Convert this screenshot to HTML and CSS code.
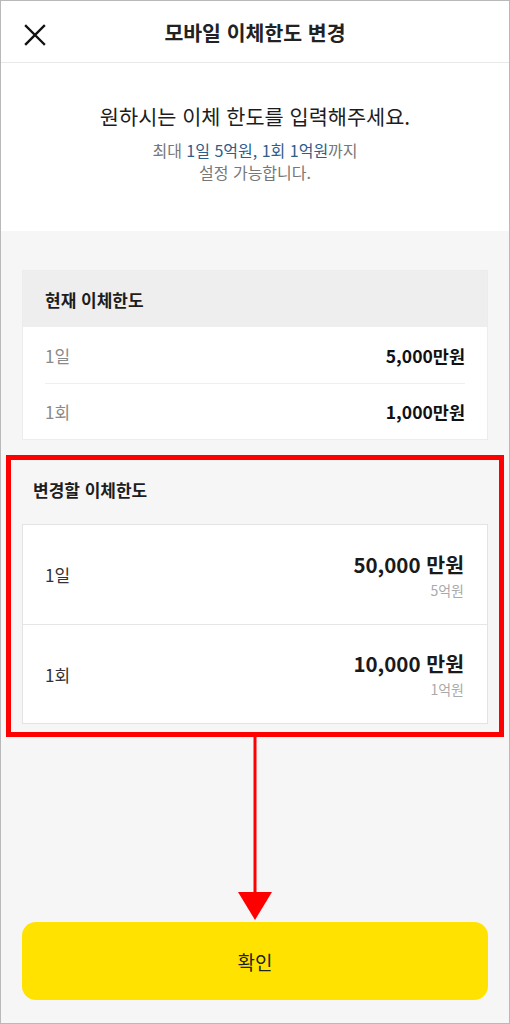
FILE: index.html
```html
<!DOCTYPE html>
<html lang="ko">
<head>
<meta charset="utf-8">
<title>모바일 이체한도 변경</title>
<link rel="stylesheet" href="styles.css">
</head>
<body>
<div class="screen">
  <header class="topbar">
    <span class="close" aria-label="닫기">
      <svg width="24" height="24" viewBox="0 0 24 24"><path d="M3 3 L21 21 M21 3 L3 21" stroke="#111" stroke-width="2.4" stroke-linecap="square" fill="none"/></svg>
    </span>
    <h1 class="title">모바일 이체한도 변경</h1>
  </header>

  <section class="intro">
    <p class="intro-main">원하시는 이체 한도를 입력해주세요.</p>
    <p class="intro-sub">최대 <span class="accent">1일 5억원, 1회 1억원</span>까지<br>설정 가능합니다.</p>
  </section>

  <main class="content">
    <div class="card current">
      <div class="card-head">현재 이체한도</div>
      <div class="row"><span class="row-label">1일</span><span class="row-value">5,000만원</span></div>
      <div class="row"><span class="row-label">1회</span><span class="row-value">1,000만원</span></div>
    </div>

    <section class="change">
      <h2 class="change-title">변경할 이체한도</h2>
      <div class="input-card">
        <div class="irow">
          <span class="irow-label">1일</span>
          <div class="irow-right">
            <span class="irow-value">50,000 만원</span>
            <span class="irow-hint">5억원</span>
          </div>
        </div>
        <div class="irow">
          <span class="irow-label">1회</span>
          <div class="irow-right">
            <span class="irow-value">10,000 만원</span>
            <span class="irow-hint">1억원</span>
          </div>
        </div>
      </div>
    </section>

    <button class="confirm" type="button">확인</button>
  </main>

  <div class="highlight"></div>
  <svg class="arrow" width="40" height="190" viewBox="0 0 40 190">
    <line x1="20" y1="0" x2="20" y2="160" stroke="#ff0000" stroke-width="3"/>
    <polygon points="3,156 37,156 20,184" fill="#ff0000"/>
  </svg>
</div>
</body>
</html>
```

FILE: styles.css
```css
* { box-sizing: border-box; }
html, body { margin: 0; padding: 0; }
body {
  font-family: "Noto Sans CJK KR", "Noto Sans", sans-serif;
  color: #222;
  background: #fff;
}
.screen {
  position: relative;
  width: 510px;
  height: 1024px;
  border: 1px solid #b9b9b9;
  display: flex;
  flex-direction: column;
  background: #f6f6f6;
  overflow: hidden;
}
.topbar {
  height: 62px;
  flex: none;
  background: #fff;
  border-bottom: 1px solid #e8e8e8;
  display: flex;
  align-items: center;
  justify-content: center;
  position: relative;
}
.close {
  position: absolute;
  left: 22px;
  top: 22px;
  width: 24px;
  height: 24px;
  display: block;
}
.close svg { display: block; }
.title {
  margin: 0;
  font-size: 20.5px;
  font-weight: 700;
  color: #222;
}
.intro {
  flex: none;
  height: 168px;
  background: #fff;
  text-align: center;
  padding-top: 38px;
}
.intro-main {
  margin: 0;
  font-size: 20.8px;
  line-height: 30px;
  color: #1d1d1d;
}
.intro-sub {
  margin: 8px 0 0;
  font-size: 16px;
  line-height: 22px;
  color: #777;
}
.accent { color: #2e5d8c; }
.content {
  flex: 1;
  display: flex;
  flex-direction: column;
  padding: 39px 21px 23px;
}
.card {
  background: #fff;
  border: 1px solid #ececec;
}
.card-head {
  height: 56px;
  background: #eeeeee;
  display: flex;
  align-items: center;
  padding-left: 22px;
  font-size: 17px;
  font-weight: 700;
  color: #1d1d1d;
}
.row {
  height: 56px;
  margin: 0 22px;
  display: flex;
  align-items: center;
  justify-content: space-between;
}
.row + .row { border-top: 1px solid #efefef; }
.row-label { font-size: 17px; color: #8a8a8a; }
.row-value { font-size: 17.5px; font-weight: 700; color: #111; }
.change {
  padding-top: 38px;
}
.change-title {
  margin: 0 0 22px 11px;
  font-size: 17px;
  line-height: 24px;
  font-weight: 700;
  color: #1d1d1d;
}
.input-card {
  background: #fff;
  border: 1px solid #e3e3e3;
}
.irow {
  height: 99px;
  display: flex;
  align-items: center;
  justify-content: space-between;
  padding: 0 23px 0 22px;
}
.irow + .irow { border-top: 1px solid #e6e6e6; }
.irow-label { font-size: 17px; color: #333; }
.irow-right {
  display: flex;
  flex-direction: column;
  align-items: flex-end;
}
.irow-value {
  font-size: 20.5px;
  font-weight: 700;
  line-height: 28px;
  color: #1a1a1a;
}
.irow-hint {
  font-size: 14px;
  line-height: 20px;
  margin-top: 2px;
  color: #aaa;
}
.confirm {
  margin-top: auto;
  height: 78px;
  border: none;
  border-radius: 14px;
  background: #ffe200;
  font-family: inherit;
  font-size: 19px;
  color: #222;
  width: 100%;
}
.highlight {
  position: absolute;
  left: 5px;
  top: 454px;
  width: 498px;
  height: 282px;
  border: 5px solid #ff0000;
  pointer-events: none;
}
.arrow {
  position: absolute;
  left: 234px;
  top: 735px;
}
```
